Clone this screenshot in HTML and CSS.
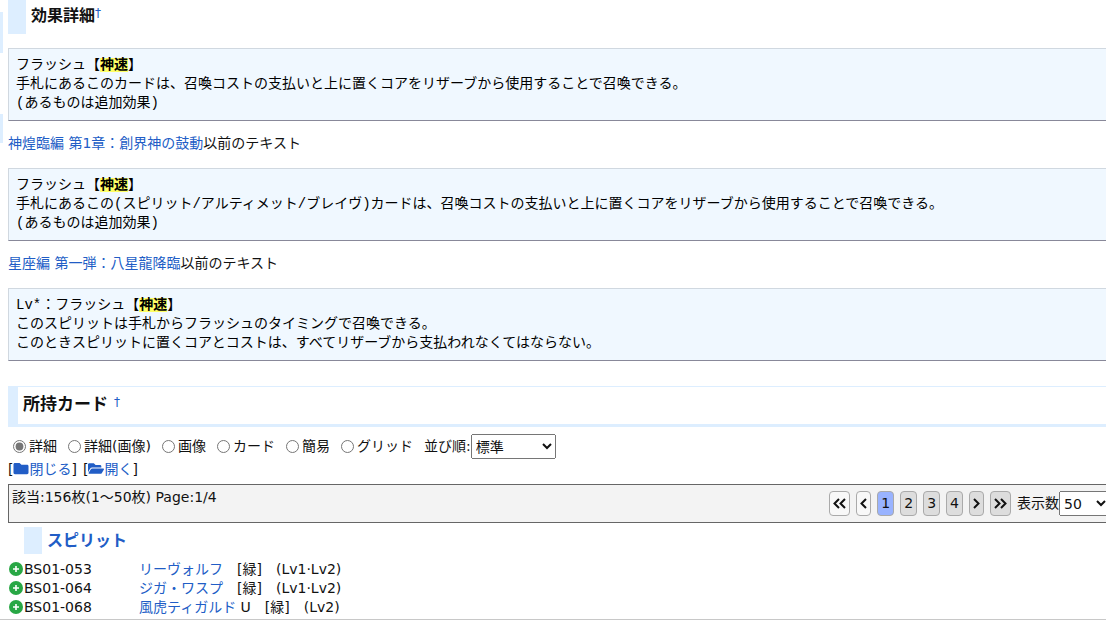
FILE: index.html
```html
<!DOCTYPE html>
<html lang="ja">
<head>
    <meta charset="UTF-8">
    <meta name="viewport" content="width=device-width, initial-scale=1.0">
    <title>神速</title>
    <link rel="stylesheet" href="styles.css">
</head>
<body>
    <svg class="sprite" aria-hidden="true">
        <symbol id="plus" viewBox="0 0 14 14">
            <circle cx="7" cy="7" r="7" fill="#28a745"/>
            <path d="M7 4v6M4 7h6" stroke="#fff" stroke-width="1.6"/>
        </symbol>
        <symbol id="folder" viewBox="0 0 512 512">
            <path fill="currentColor" d="M464 128H272l-64-64H48C21 64 0 85 0 112v288c0 27 21 48 48 48h416c27 0 48-21 48-48V176c0-27-21-48-48-48z"/>
        </symbol>
        <symbol id="folder-open" viewBox="0 0 576 512">
            <path fill="currentColor" d="M573 292l-73 124a64 64 0 0 1-55 32H45c-18 0-30-20-21-36l73-124a64 64 0 0 1 55-32h400c18 0 30 20 21 36zM152 224h328v-48c0-27-21-48-48-48H272l-64-64H48C21 64 0 85 0 112v278l69-118a96 96 0 0 1 83-48z"/>
        </symbol>
        <symbol id="left" viewBox="0 0 7 13">
            <path d="M6 2L1.500 6.500L6 11" fill="none" stroke="#111" stroke-width="2"/>
        </symbol>
        <symbol id="right" viewBox="0 0 7 13">
            <path d="M1 2l4.500 4.500L1 11" fill="none" stroke="#111" stroke-width="2"/>
        </symbol>
        <symbol id="left2" viewBox="0 0 13 13">
            <path d="M6 2L1.500 6.500L6 11M12 2L7.500 6.500L12 11" fill="none" stroke="#111" stroke-width="2"/>
        </symbol>
        <symbol id="right2" viewBox="0 0 13 13">
            <path d="M1 2l4.500 4.500L1 11M7 2l4.500 4.500L7 11" fill="none" stroke="#111" stroke-width="2"/>
        </symbol>
    </svg>

    <div class="page">
        <div class="sidebar">
            <div class="side-title"></div>
            <div class="side-item"></div>
        </div>

        <div class="main">
            <h3 class="sub-title">効果詳細<a class="anchor" href="#effect">†</a></h3>

<pre>フラッシュ【<strong>神速</strong>】
手札にあるこのカードは、召喚コストの支払いと上に置くコアをリザーブから使用することで召喚できる。
(あるものは追加効果)</pre>

            <p><a href="#bs44">神煌臨編 第1章：創界神の鼓動</a>以前のテキスト</p>

<pre>フラッシュ【<strong>神速</strong>】
手札にあるこの(スピリット/アルティメット/ブレイヴ)カードは、召喚コストの支払いと上に置くコアをリザーブから使用することで召喚できる。
(あるものは追加効果)</pre>

            <p><a href="#bs10">星座編 第一弾：八星龍降臨</a>以前のテキスト</p>

<pre>Lv*：フラッシュ【<strong>神速</strong>】
このスピリットは手札からフラッシュのタイミングで召喚できる。
このときスピリットに置くコアとコストは、すべてリザーブから支払われなくてはならない。</pre>

            <h2 class="title">所持カード <a class="anchor" href="#cards">†</a></h2>

            <form class="view-form">
                <label><input type="radio" name="view" checked>詳細</label>
                <label><input type="radio" name="view">詳細(画像)</label>
                <label><input type="radio" name="view">画像</label>
                <label><input type="radio" name="view">カード</label>
                <label><input type="radio" name="view">簡易</label>
                <label><input type="radio" name="view">グリッド</label>
                <div class="sort">
                    <label for="sort">並び順:</label>
                    <select id="sort" class="sort-select"><option>標準</option></select>
                </div>
            </form>

            <div class="toggles">
                <span>[<a href="#close"><svg class="folder"><use href="#folder"/></svg>閉じる</a>]</span>
                <span>[<a href="#open"><svg class="folder"><use href="#folder-open"/></svg>開く</a>]</span>
            </div>

            <div class="result-bar">
                <div class="count">該当:156枚(1～50枚) Page:1/4</div>
                <div class="pager">
                    <button class="off" aria-label="最初"><svg class="double"><use href="#left2"/></svg></button>
                    <button class="off" aria-label="前"><svg class="single"><use href="#left"/></svg></button>
                    <button class="current">1</button>
                    <button>2</button>
                    <button>3</button>
                    <button>4</button>
                    <button aria-label="次"><svg class="single"><use href="#right"/></svg></button>
                    <button aria-label="最後"><svg class="double"><use href="#right2"/></svg></button>
                    <div class="per-page">
                        <label for="perPage">表示数</label>
                        <select id="perPage" class="per-select"><option>50</option></select>
                    </div>
                </div>
            </div>

            <h4 class="group"><a href="#spirit">スピリット</a></h4>

            <ul class="cards">
                <li><svg class="plus"><use href="#plus"/></svg><span class="no">BS01-053</span><a href="#053">リーヴォルフ</a>　[緑]　(Lv1·Lv2)</li>
                <li><svg class="plus"><use href="#plus"/></svg><span class="no">BS01-064</span><a href="#064">ジガ・ワスプ</a>　[緑]　(Lv1·Lv2)</li>
                <li><svg class="plus"><use href="#plus"/></svg><span class="no">BS01-068</span><a href="#068">風虎ティガルド</a>&nbsp;U　[緑]　(Lv2)</li>
                <li><svg class="plus"><use href="#plus"/></svg></li>
            </ul>
        </div>
    </div>
</body>
</html>
```
FILE: styles.css
```css
* {
    box-sizing: border-box;
}
body {
    margin: 0;
    height: 100vh;
    overflow: hidden;
    background: #fff;
    color: #111;
    font-family: "DejaVu Sans", "Noto Sans CJK JP", sans-serif;
    font-size: 14px;
    line-height: 19px;
}
a {
    color: #215dc6;
    text-decoration: none;
}
a:hover {
    text-decoration: underline;
}
select, button {
    font: inherit;
    color: #111;
}
.sprite {
    display: none;
}
.page {
    display: flex;
    gap: 5px;
    height: calc(100vh - 2px);
    overflow: hidden;
    border-bottom: 1px solid #c8c8c8;
}
.sidebar {
    flex: 0 0 3px;
    padding-top: 12px;
}
.side-title {
    height: 41px;
    margin-bottom: 61px;
    background: #ddeeff;
}
.side-item {
    height: 29px;
    background: #ddeeff;
}
.main {
    flex: 1;
    min-width: 0;
    margin-right: -8px;
}
.sub-title, .group {
    margin: 0;
    border-left: 18px solid #ddeeff;
    padding-left: 5px;
    font-size: 16px;
}
.sub-title {
    height: 34px;
    margin-bottom: 14px;
    padding-top: 6px;
    line-height: 20px;
}
.anchor {
    font-size: 12px;
    font-weight: normal;
    line-height: 1;
    vertical-align: 4px;
}
pre {
    margin: 0;
    padding: 7px;
    border: 1px solid #d0d8e0;
    border-bottom-color: #888899;
    background: #f0f8ff;
    color: #000;
    font-family: "Liberation Mono", "Noto Sans CJK JP", monospace;
    font-size: 14px;
    line-height: 19px;
}
pre strong {
    background: linear-gradient(#ffff66, #ffff66) center / 100% 14px no-repeat;
}
p {
    margin: 13px 0 15px;
}
.title {
    margin: 25px 0 7px;
    padding: 4px 5px 6px;
    border: 1px solid #ddeeff;
    border-left-width: 10px;
    border-bottom-width: 3px;
    font-size: 17px;
    line-height: 27px;
}
.view-form {
    display: flex;
    align-items: center;
    gap: 11px;
    padding-left: 5px;
}
.view-form > label {
    display: flex;
    align-items: center;
    gap: 3px;
}
.view-form input {
    width: 13px;
    height: 13px;
    margin: 0;
    accent-color: #767676;
}
.sort, .per-page {
    display: flex;
    align-items: center;
}
.sort-select {
    width: 85px;
    height: 25px;
}
.toggles {
    display: flex;
    gap: 6px;
    padding-top: 1px;
}
.folder {
    width: 16px;
    height: 15px;
    vertical-align: -2px;
}
.result-bar {
    display: flex;
    justify-content: space-between;
    margin-top: 5px;
    padding: 3px;
    height: 39px;
    border: 1px solid #666;
    background: #f3f3f3;
}
.pager {
    display: flex;
    align-items: center;
    gap: 6px;
}
.pager button {
    display: flex;
    align-items: center;
    height: 25px;
    padding: 0 3px;
    border: 1px solid #aaa;
    border-radius: 4px;
    background: #ddd;
}
.pager .off {
    background: #f8f8f8;
}
.pager .current {
    background: #99b3ff;
}
.double {
    width: 13px;
    height: 13px;
}
.single {
    width: 7px;
    height: 13px;
}
.per-select {
    width: 51px;
    height: 25px;
}
.group {
    margin: 4px 0 6px 16px;
    line-height: 27px;
}
.cards {
    margin: 0;
    padding: 0;
    list-style: none;
}
.cards li {
    display: flex;
    height: 19px;
    padding-left: 1px;
}
.plus {
    width: 14px;
    height: 14px;
    margin-top: 2px;
    margin-right: 1px;
}
.no {
    width: 115px;
}
```
